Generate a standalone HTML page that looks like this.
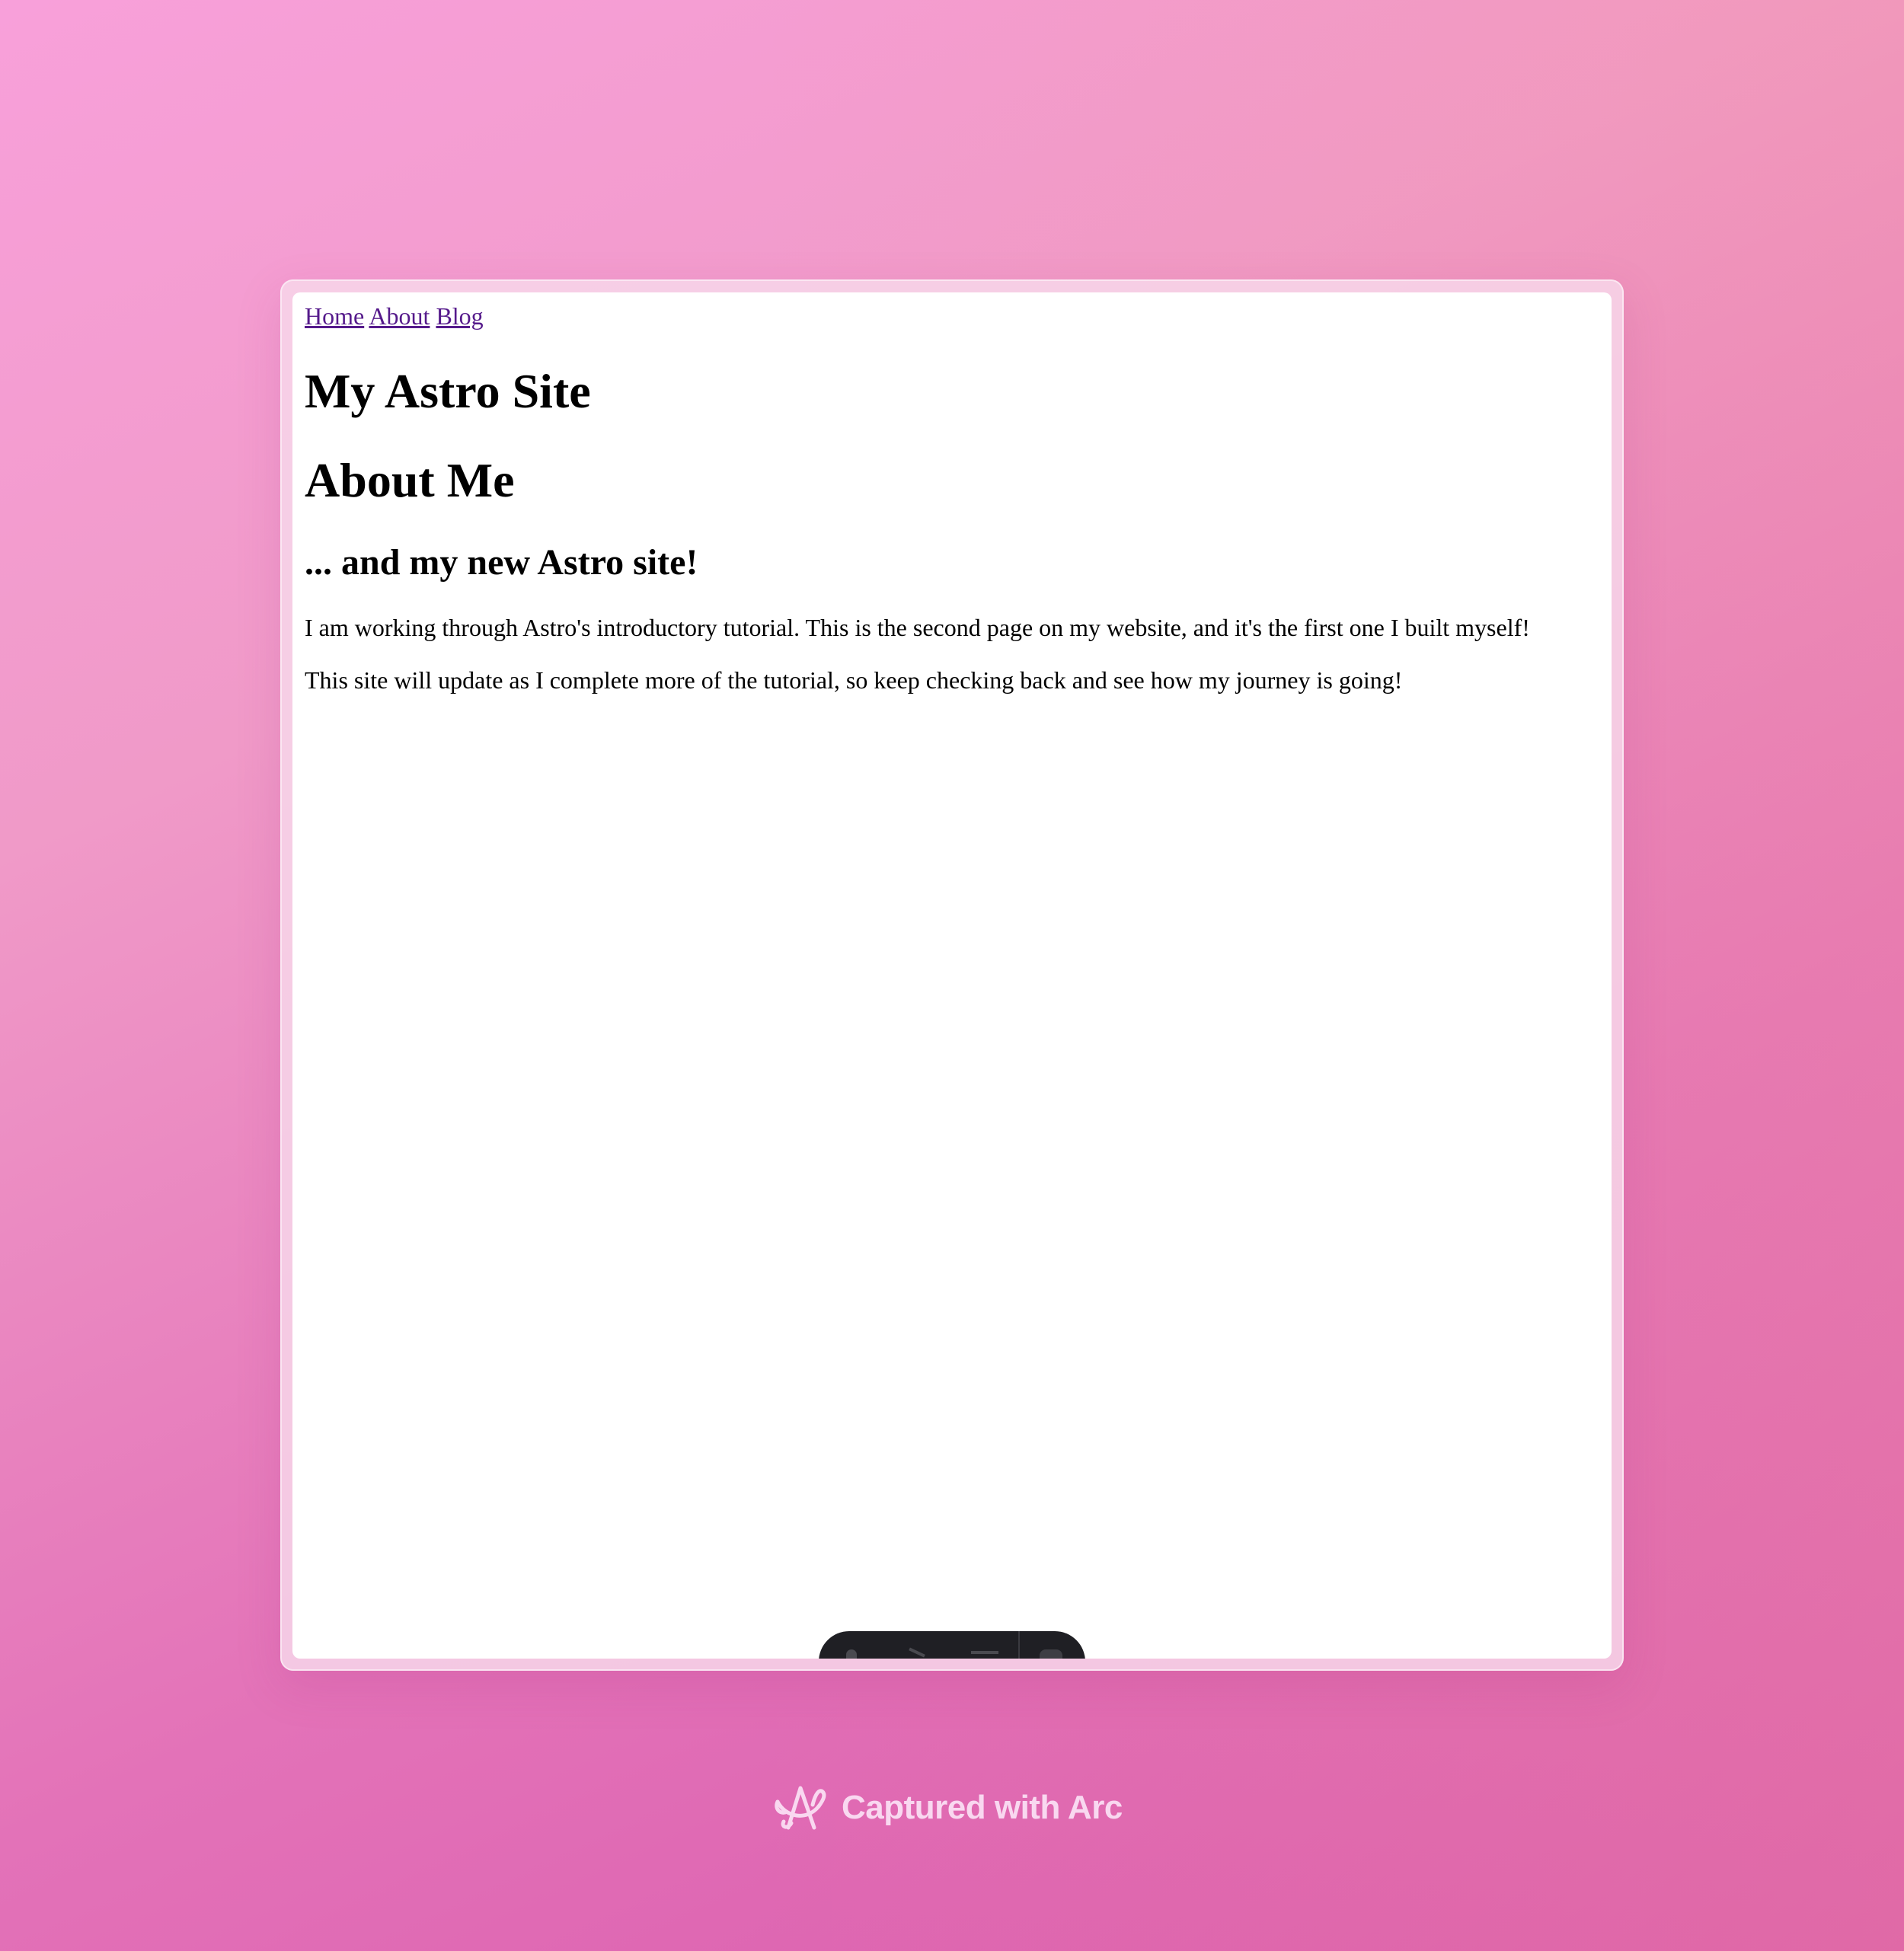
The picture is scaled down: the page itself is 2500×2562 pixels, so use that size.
<!DOCTYPE html>
<html><head><meta charset="utf-8"><style>
html,body{margin:0;padding:0}
body{width:2500px;height:2562px;position:relative;overflow:hidden;
background:linear-gradient(155deg,#f8a0da 0%,#f09ac8 30%,#e372b8 65%,#d95aac 100%);}
.ov{position:absolute;inset:0;background:linear-gradient(90deg,rgba(255,255,255,0) 40%,rgba(245,150,150,0.25) 100%);}
.frame{position:absolute;left:368px;top:367px;width:1764px;height:1827px;border-radius:17px;background:rgba(247,215,234,0.85);box-shadow:0 0 0 2px rgba(255,255,255,0.5) inset,0 20px 60px rgba(160,40,120,0.15);}
.page{position:absolute;left:384px;top:384px;width:1732px;height:1794px;border-radius:10px;background:#fff;overflow:hidden;
font-family:"Liberation Serif",serif;font-size:32px;color:#000;}
.in{margin:13px 16px 16px;}
a{color:#551a8b;text-decoration:underline}
h1{font-size:64px;margin:43px 0;line-height:74px}
h2{font-size:48px;margin:40px 0;line-height:55px}
p{margin:32px 0;line-height:37px}
.nav{line-height:37px}
.tb{position:absolute;left:691px;top:1758px;width:350px;height:80px;background:#1f1f24;border-radius:40px;}
.tb i{position:absolute;top:0;left:262px;width:2px;height:60px;background:#3a3a40}
.tb b{position:absolute;background:#4a4a50;}
.foot{position:absolute;left:1015px;top:2338px;height:72px;display:flex;align-items:center;gap:16px;
font-family:"Liberation Sans",sans-serif;font-weight:bold;font-size:44px;color:#f9d8f0;letter-spacing:-0.5px}
</style></head><body>
<div class="ov"></div>
<div class="frame"></div>
<div class="page"><div class="in">
<div class="nav"><a>Home</a> <a>About</a> <a>Blog</a></div>
<h1>My Astro Site</h1>
<h1>About Me</h1>
<h2>... and my new Astro site!</h2>
<p>I am working through Astro's introductory tutorial. This is the second page on my website, and it's the first one I built myself!</p>
<p>This site will update as I complete more of the tutorial, so keep checking back and see how my journey is going!</p>
</div>
<div class="tb"><i></i>
<b style="left:36px;top:24px;width:14px;height:14px;border-radius:7px 7px 0 0"></b>
<b style="left:200px;top:26px;width:36px;height:4px"></b>
<b style="left:118px;top:26px;width:22px;height:4px;transform:rotate(25deg)"></b>
<b style="left:290px;top:24px;width:30px;height:12px;border-radius:8px 8px 0 0;background:#3e3e44"></b>
</div>
</div>
<div class="foot">
<svg width="74" height="64" viewBox="0 0 74 64" fill="none" stroke="#f9d8f0" stroke-width="5" stroke-linecap="round" stroke-linejoin="round">
<path d="M20 58 L36 6 L54 58"/>
<path d="M6 24 C16 44 44 50 60 30"/>
<path d="M60 30 C66 22 70 14 64 10 C58 8 54 20 52 28"/>
<path d="M6 24 C2 32 8 40 16 38"/>
<path d="M14 50 C10 58 20 60 24 52"/>
</svg>
<span>Captured with Arc</span>
</div>
</body></html>
